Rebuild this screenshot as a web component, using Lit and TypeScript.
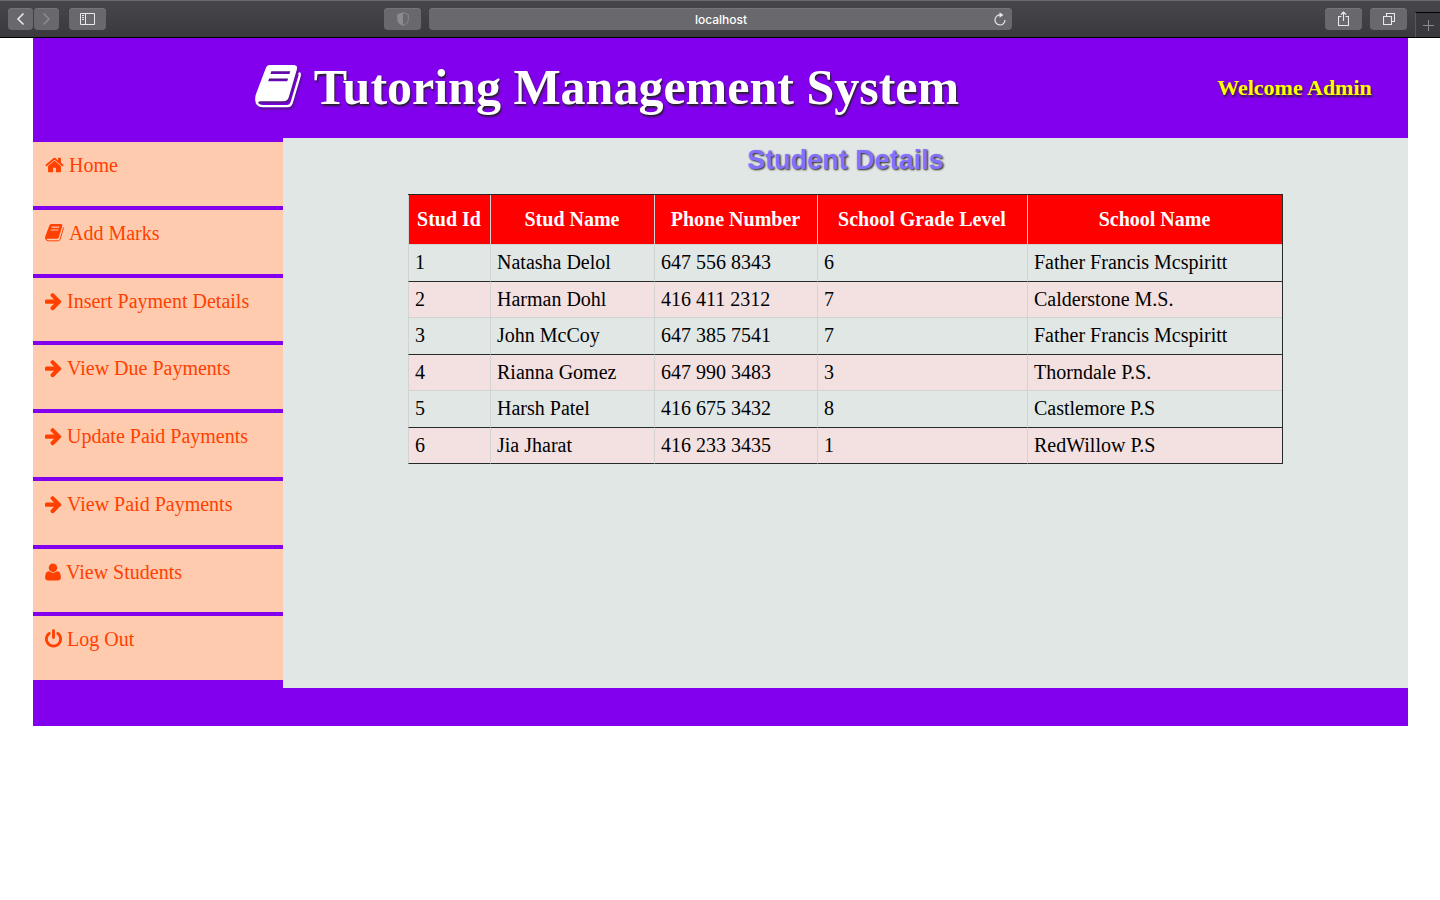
import { LitElement, html, css, svg } from "lit";
import { customElement } from "lit/decorators.js";

type Glyph = { box: string; width: number; d: string; edge?: string };

const glyphs: Record<string, Glyph> = {
  home: {
    box: "64 0 1664 1792",
    width: 1664,
    d: "M1472 992v480q0 26-19 45t-45 19h-384v-384h-256v384h-384q-26 0-45-19t-19-45v-480q0-1 .5-3t.5-3l575-474 575 474q1 2 1 6zm223-69l-62 74q-8 9-21 11h-3q-13 0-21-7l-692-577-692 577q-12 8-24 7-13-2-21-11l-62-74q-8-10-7-23.5t11-21.5l719-599q32-26 76-26t76 26l244 204v-195q0-14 9-23t23-9h192q14 0 23 9t9 23v408l219 182q10 8 11 21.5t-7 23.5z",
  },
  book: {
    box: "0 0 47 50",
    width: 1664,
    d: "M15 2.500H39q5 0 3.800 4.500L34.500 35.500q-1.200 4-5.500 4H6q-3 0-3.500 2.500L.5 38q-.8-3 .8-6.500L10.500 7q1.500-4.500 4.500-4.500zM16.700 9l-.9 2.700H35.200L36 9zM14.400 16.300l-.9 2.700H33l.8-2.700z",
    edge: "M1.500 37q-.5 7.500 6.500 7.500H33q3.500 0 4.500-3.500L45.500 14q.6-2-.5-3.500",
  },
  arrow: {
    box: "128 0 1536 1792",
    width: 1536,
    d: "M1600 960q0 54-37 91l-651 651q-39 37-91 37-51 0-90-37l-75-75q-38-38-38-91t38-91l293-293h-704q-52 0-84.5-37.5t-32.5-90.5v-128q0-53 32.5-90.5t84.5-37.5h704l-293-294q-38-36-38-90t38-90l75-75q38-38 90-38 53 0 91 38l651 651q37 35 37 90z",
  },
  user: {
    box: "192 0 1408 1792",
    width: 1408,
    d: "M1600 1405q0 120-73 189.5t-194 69.5h-874q-121 0-194-69.5t-73-189.5q0-53 3.5-103.5t14-109 26.5-108.5 43-97.5 62-81 85.5-53.5 111.5-20q9 0 42 21.5t74.5 48 108 48 133.5 21.5 133.5-21.5 108-48 74.5-48 42-21.5q61 0 111.5 20t85.5 53.5 62 81 43 97.5 26.5 108.5 14 109 3.5 103.5zm-320-893q0 159-112.5 271.5t-271.5 112.5-271.5-112.5-112.5-271.5 112.5-271.5 271.5-112.5 271.5 112.5 112.5 271.5z",
  },
  power: {
    box: "128 0 1536 1792",
    width: 1536,
    d: "M1664 896q0 156-61 298t-164 245-245 164-298 61-298-61-245-164-164-245-61-298q0-182 80.5-343t226.5-270q43-32 95.5-25t83.5 50q32 42 24.5 94.5t-49.5 84.5q-98 74-151.5 181t-53.5 228q0 104 40.5 198.5t109.5 163.5 163.5 109.5 198.5 40.5 198.5-40.5 163.5-109.5 109.5-163.5 40.5-198.5q0-121-53.5-228t-151.5-181q-42-32-49.5-84.5t24.5-94.5q31-43 84-50t95 25q146 109 226.5 270t80.5 343zm-640-768v640q0 52-38 90t-90 38-90-38-38-90v-640q0-52 38-90t90-38 90 38 38 90z",
  },
};

const glyph = (name: string, size: number) => {
  const g = glyphs[name];
  return html`<svg class="glyph" aria-hidden="true" viewBox=${g.box} height=${size}
    width=${Math.round((g.width / 1792) * size)}>${svg`<path fill-rule=${g.edge ? "evenodd" : "nonzero"} d=${g.d}></path>`}${g.edge
    ? svg`<path class="edge" d=${g.edge}></path>`
    : ""}</svg>`;
};

const links = [
  ["home", "Home"],
  ["book", "Add Marks"],
  ["arrow", "Insert Payment Details"],
  ["arrow", "View Due Payments"],
  ["arrow", "Update Paid Payments"],
  ["arrow", "View Paid Payments"],
  ["user", "View Students"],
  ["power", "Log Out"],
];

const students = [
  ["1", "Natasha Delol", "647 556 8343", "6", "Father Francis Mcspiritt"],
  ["2", "Harman Dohl", "416 411 2312", "7", "Calderstone M.S."],
  ["3", "John McCoy", "647 385 7541", "7", "Father Francis Mcspiritt"],
  ["4", "Rianna Gomez", "647 990 3483", "3", "Thorndale P.S."],
  ["5", "Harsh Patel", "416 675 3432", "8", "Castlemore P.S"],
  ["6", "Jia Jharat", "416 233 3435", "1", "RedWillow P.S"],
];

@customElement("browser-bar")
export class BrowserBar extends LitElement {
  static styles = css`
    :host {
      display: grid;
      grid-template-columns: 384fr 628fr 428fr;
      align-items: center;
      box-sizing: border-box;
      height: 38px;
      border-top: 1px solid #6b6a6e;
      border-bottom: 1px solid #000;
      background: linear-gradient(#47464a, #3a393d);
      font-family: Inter, "Liberation Sans", sans-serif;
    }
    .group {
      display: flex;
      align-items: center;
    }
    .left {
      padding-left: 8px;
    }
    .center {
      gap: 8px;
    }
    .right {
      justify-content: flex-end;
      gap: 8px;
      height: 100%;
    }
    button {
      display: flex;
      align-items: center;
      justify-content: center;
      padding: 0;
      border: 0;
      width: 37px;
      height: 22px;
      border-radius: 4px;
      background: #69686c;
      color: #e8e8ea;
      box-shadow: inset 0 1px #757478;
      flex: none;
    }
    svg {
      fill: none;
      stroke: currentColor;
      display: block;
    }
    .step {
      width: 25px;
      margin-right: 1px;
    }
    .side {
      margin-left: 9px;
    }
    .dim {
      color: #8b8a8e;
    }
    .address {
      display: flex;
      flex: 1;
      height: 22px;
      border-radius: 4px;
      background: #69686c;
      box-shadow: inset 0 1px #757478;
    }
    input {
      flex: 1;
      min-width: 0;
      padding: 1px 0 0 25px;
      border: 0;
      background: none;
      color: #fff;
      font: 500 12px/21px Inter, "Liberation Sans", sans-serif;
      text-align: center;
    }
    .address button {
      width: 24px;
      background: none;
      box-shadow: none;
    }
    .right .new-tab {
      align-self: flex-end;
      width: 25px;
      height: 25px;
      border-radius: 0;
      border-top: 1px solid #000;
      border-left: 1px solid #59585c;
      background: #3a393d;
      box-shadow: none;
      color: #8b8a8e;
    }
  `;

  render() {
    return html`
      <div class="group left">
        <button class="step" aria-label="Back">
          <svg width="9" height="14" viewBox="0 0 9 14" stroke-width="1.6"><path d="M7.500 1.500 2 7l5.500 5.500"></path></svg>
        </button>
        <button class="step dim" aria-label="Forward">
          <svg width="9" height="14" viewBox="0 0 9 14" stroke-width="1.6"><path d="M1.500 1.500 7 7l-5.500 5.500"></path></svg>
        </button>
        <button class="side" aria-label="Sidebar">
          <svg width="15" height="12" viewBox="0 0 15 12"><path d="M.5.5h14v11H.5zM5.500.5v11M2 2.500h2M2 4.500h2M2 6.500h2"></path></svg>
        </button>
      </div>
      <div class="group center">
        <button class="dim" aria-label="Privacy">
          <svg width="12" height="14" viewBox="0 0 12 14"><path d="M6 .7 11.300 2.500v5c0 3-2.300 4.800-5.300 5.900C3 12.300.7 10.500.7 7.500v-5z"></path><path fill="currentColor" stroke="none" d="M6 .7v12.700C3 12.300.7 10.500.7 7.500v-5z"></path></svg>
        </button>
        <div class="address">
          <input aria-label="Address" value="localhost" />
          <button aria-label="Reload">
            <svg width="12" height="14" viewBox="0 0 12 14" stroke-width="1.200"><path d="M6.500 3A5 5 0 1 0 11 8"></path><path fill="currentColor" stroke="none" d="M5.500.3 9.500 3 5.500 5.700z"></path></svg>
          </button>
        </div>
      </div>
      <div class="group right">
        <button aria-label="Share">
          <svg width="11" height="16" viewBox="0 0 11 16" stroke-width="1.100"><path d="M3.500 5.500h-3v9h10v-9h-3M5.500 10V1.200M2.800 3.700 5.500 1l2.700 2.700"></path></svg>
        </button>
        <button aria-label="Tabs">
          <svg width="12" height="12" viewBox="0 0 12 12" stroke-width="1.100"><path d="M.5 3.500h8v8h-8zM3.500 3.500v-3h8v8h-3"></path></svg>
        </button>
        <button class="new-tab" aria-label="New tab">
          <svg width="11" height="11" viewBox="0 0 11 11"><path d="M5.500 0v11M0 5.500h11"></path></svg>
        </button>
      </div>
    `;
  }
}

@customElement("app-root")
export class AppRoot extends LitElement {
  static styles = css`
    :host {
      display: block;
      min-height: 100vh;
      background: #fff;
      font-family: "Liberation Serif", "Times New Roman", serif;
      font-size: 20px;
      line-height: 24px;
    }
    .page {
      margin: 0 32px 0 33px;
      background: #8300ee;
      padding-bottom: 38px;
    }
    header {
      display: grid;
      grid-template-columns: 1fr 227px;
      align-items: center;
      justify-items: center;
      height: 100px;
      text-shadow: 1px 2px 2px #222;
    }
    h1 {
      display: flex;
      align-items: center;
      gap: 13px;
      margin: 0;
      padding-bottom: 2px;
      font-size: 50px;
      line-height: 60px;
      color: #fff;
    }
    .glyph {
      fill: currentColor;
      flex: none;
    }
    .edge {
      fill: none;
      stroke: currentColor;
      stroke-width: 2.4;
    }
    h1 .glyph {
      filter: drop-shadow(1px 2px 1px #2228);
    }
    .welcome {
      margin: 0;
      font-size: 22px;
      font-weight: bold;
      color: #ff0;
    }
    .body {
      display: grid;
      grid-template-columns: 250px 1fr;
      min-height: 550px;
    }
    nav {
      display: grid;
      grid-auto-rows: 1fr;
      gap: 4px;
      padding: 4px 0 8px;
    }
    nav a {
      display: flex;
      align-items: flex-start;
      gap: 5px;
      padding: 11px 12px 0;
      background: #ffcbae;
      color: #ff4000;
      text-decoration: none;
    }
    nav .glyph {
      margin-top: 2px;
    }
    main {
      background: #e1e7e4;
      padding: 8px 125px;
    }
    h2 {
      margin: 0 0 20px;
      font: bold 27px/28px "Liberation Sans", Arial, sans-serif;
      text-align: center;
      color: #8470ff;
      text-shadow: 1px 1px 2px #222;
    }
    table {
      width: 100%;
      table-layout: fixed;
      border-collapse: separate;
      border-spacing: 0;
      border-top: 1px solid #252b2a;
      border-right: 1px solid #252b2a;
    }
    .id {
      width: 82px;
    }
    .name {
      width: 164px;
    }
    .phone {
      width: 163px;
    }
    .grade {
      width: 210px;
    }
    th,
    td {
      box-sizing: border-box;
      border-left: 1px solid lightgray;
      border-bottom: 1px solid lightgray;
      white-space: nowrap;
    }
    th {
      height: 50px;
      padding: 0 1px 2px 0;
      background: #f00;
      color: #fff;
    }
    td {
      height: 37px;
      padding: 0 6px 2px;
      color: #000;
    }
    tr:nth-child(odd) td {
      border-bottom-color: #252b2a;
    }
    tr:nth-child(even) td {
      height: 36px;
      background: #f3e1e1;
    }
    tr:last-child td {
      border-bottom-color: #252b2a;
    }
  `;

  render() {
    return html`
      <browser-bar></browser-bar>
      <div class="page">
        <header>
          <h1>${glyph("book", 50)}<span>Tutoring Management System</span></h1>
          <p class="welcome">Welcome Admin</p>
        </header>
        <div class="body">
          <nav>
            ${links.map(([icon, label]) => html`<a href="#">${glyph(icon, 20)}<span>${label}</span></a>`)}
          </nav>
          <main>
            <h2>Student Details</h2>
            <table>
              <colgroup>
                <col class="id" /><col class="name" /><col class="phone" /><col class="grade" /><col />
              </colgroup>
              <thead>
                <tr>
                  <th>Stud Id</th>
                  <th>Stud Name</th>
                  <th>Phone Number</th>
                  <th>School Grade Level</th>
                  <th>School Name</th>
                </tr>
              </thead>
              <tbody>
                ${students.map((row) => html`<tr>${row.map((cell) => html`<td>${cell}</td>`)}</tr>`)}
              </tbody>
            </table>
          </main>
        </div>
      </div>
    `;
  }
}
